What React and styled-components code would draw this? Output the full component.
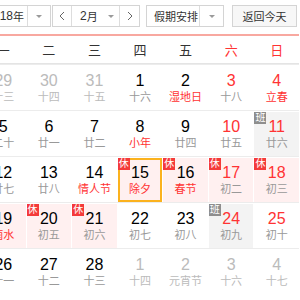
import styled, { createGlobalStyle } from "styled-components";

const GlobalStyle = createGlobalStyle`
  body {
    margin: 0;
    background: #fff;
    font-family: "Liberation Sans", Arial, "Noto Sans CJK SC", sans-serif;
    overflow: hidden;
  }
`;

const Calendar = styled.div`
  width: 318px;
  margin-left: -19px;
  padding-top: 5px;
`;

const Toolbar = styled.div`
  display: flex;
  height: 22px;
  margin-bottom: 7px;
  font-size: 12px;
  color: #333;
  white-space: nowrap;
`;

const Box = styled.div`
  display: flex;
  box-sizing: border-box;
  height: 22px;
  width: ${(p) => p.$w}px;
  margin-right: ${(p) => p.$mr || 0}px;
  border: 1px solid #d4d4d4;
  background: ${(p) => (p.$button ? "#f7f7f7" : "#fff")};
  align-items: center;
  justify-content: center;
`;

const Label = styled.div`
  flex: 1;
  display: flex;
  align-items: center;
  height: 100%;
  overflow: hidden;
  justify-content: ${(p) => p.$justify || "flex-start"};
  padding: ${(p) => p.$pad || "0"};
  border-left: ${(p) => (p.$divided ? "1px solid #ddd" : "none")};
  border-right: ${(p) => (p.$divided ? "1px solid #ddd" : "none")};
`;

const Part = styled.div`
  width: ${(p) => p.$w}px;
  flex-shrink: 0;
  height: 100%;
  display: flex;
  align-items: center;
  justify-content: center;
  border-left: ${(p) => (p.$divider ? "1px solid #ddd" : "none")};
`;

const Caret = styled.span`
  width: 0;
  height: 0;
  border-left: 3px solid transparent;
  border-right: 3px solid transparent;
  border-top: 3px solid #9a9a9a;
  margin-left: ${(p) => (p.$auto ? "auto" : "0")};
`;

const Cjk = styled.span`
  font-size: 11px;
`;

const Header = styled.div`
  display: grid;
  grid-template-columns: repeat(7, 1fr);
  column-gap: 1px;
  height: 27px;
  border-top: 2px solid #f8a8a0;
  border-bottom: 1px solid #e4e4e4;
  align-items: center;
  font-size: 13px;
`;

const WeekDay = styled.div`
  text-align: center;
  color: ${(p) => (p.$weekend ? "#f33" : "#333")};
`;

const Row = styled.div`
  display: grid;
  grid-template-columns: repeat(7, 1fr);
  column-gap: 1px;
  border-top: 1px solid #ececec;
  padding-top: 1px;
`;

const cellBg = { rest: "#fff0f0", work: "#f3f3f3", none: "transparent" };

const Cell = styled.div`
  position: relative;
  height: 44px;
  box-sizing: border-box;
  padding-top: 6px;
  text-align: center;
  background: ${(p) => cellBg[p.$kind || "none"]};
  box-shadow: ${(p) => (p.$today ? "inset 0 0 0 2px #fbb21e" : "none")};
`;

const Num = styled.div`
  font-size: 16px;
  line-height: 18px;
  color: ${(p) => (p.$other ? "#bbb" : p.$red ? "#f33" : "#000")};
`;

const Lunar = styled.div`
  font-size: 11px;
  line-height: 14px;
  color: ${(p) => (p.$other ? "#bbb" : p.$red ? "#f33" : "#999")};
`;

const Badge = styled.span`
  position: absolute;
  top: 0;
  left: 0;
  width: 12px;
  height: 12px;
  line-height: 12px;
  font-size: 10px;
  color: #fff;
  text-align: center;
  background: ${(p) => (p.$rest ? "#f43a3a" : "#8e8e8e")};
`;

const Chevron = ({ dir }) => (
  <svg width="6" height="10" viewBox="0 0 6 10">
    <polyline
      points={dir === "left" ? "5,1 1,5 5,9" : "1,1 5,5 1,9"}
      fill="none"
      stroke="#666"
      strokeWidth="1"
    />
  </svg>
);

const weekDays = ["一", "二", "三", "四", "五", "六", "日"];

// kind: rest = 休, work = 班
const weeks = [
  [
    { d: 29, l: "十三", other: true },
    { d: 30, l: "十四", other: true },
    { d: 31, l: "十五", other: true },
    { d: 1, l: "十六" },
    { d: 2, l: "湿地日", fest: true },
    { d: 3, l: "十八", red: true },
    { d: 4, l: "立春", fest: true, red: true },
  ],
  [
    { d: 5, l: "二十" },
    { d: 6, l: "廿一" },
    { d: 7, l: "廿二" },
    { d: 8, l: "小年", fest: true },
    { d: 9, l: "廿四" },
    { d: 10, l: "廿五", red: true },
    { d: 11, l: "廿六", red: true, kind: "work" },
  ],
  [
    { d: 12, l: "廿七" },
    { d: 13, l: "廿八" },
    { d: 14, l: "情人节", fest: true },
    { d: 15, l: "除夕", fest: true, kind: "rest", today: true },
    { d: 16, l: "春节", fest: true, kind: "rest" },
    { d: 17, l: "初二", red: true, kind: "rest" },
    { d: 18, l: "初三", red: true, kind: "rest" },
  ],
  [
    { d: 19, l: "雨水", fest: true, kind: "rest" },
    { d: 20, l: "初五", kind: "rest" },
    { d: 21, l: "初六", kind: "rest" },
    { d: 22, l: "初七" },
    { d: 23, l: "初八" },
    { d: 24, l: "初九", red: true, kind: "work" },
    { d: 25, l: "初十", red: true },
  ],
  [
    { d: 26, l: "十一" },
    { d: 27, l: "十二" },
    { d: 28, l: "十三" },
    { d: 1, l: "十四", other: true },
    { d: 2, l: "元宵节", other: true },
    { d: 3, l: "十六", other: true },
    { d: 4, l: "十七", other: true },
  ],
];

export default function App() {
  return (
    <>
      <GlobalStyle />
      <Calendar>
        <Toolbar>
          <Box $w={70} $mr={1}>
            <Label $justify="flex-end" $pad="0 3px 0 0">
              2018<Cjk>年</Cjk>
            </Label>
            <Part $w={22} $divider>
              <Caret />
            </Part>
          </Box>
          <Box $w={88} $mr={6}>
            <Part $w={18}>
              <Chevron dir="left" />
            </Part>
            <Label $divided $pad="0 5px 0 8px">
              2<Cjk>月</Cjk>
              <Caret $auto />
            </Label>
            <Part $w={19}>
              <Chevron dir="right" />
            </Part>
          </Box>
          <Box $w={78} $mr={8}>
            <Label $pad="0 0 0 7px">
              <Cjk>假期安排</Cjk>
            </Label>
            <Part $w={23} $divider>
              <Caret />
            </Part>
          </Box>
          <Box $w={65} $button>
            <Cjk>返回今天</Cjk>
          </Box>
        </Toolbar>
        <Header>
          {weekDays.map((w, i) => (
            <WeekDay key={w} $weekend={i > 4}>
              {w}
            </WeekDay>
          ))}
        </Header>
        {weeks.map((week, r) => (
          <Row key={r}>
            {week.map((c, i) => (
              <Cell key={i} $kind={c.kind} $today={c.today}>
                {c.kind && (
                  <Badge $rest={c.kind === "rest"}>
                    {c.kind === "rest" ? "休" : "班"}
                  </Badge>
                )}
                <Num $other={c.other} $red={c.red}>
                  {c.d}
                </Num>
                <Lunar $other={c.other} $red={c.fest}>
                  {c.l}
                </Lunar>
              </Cell>
            ))}
          </Row>
        ))}
      </Calendar>
    </>
  );
}
